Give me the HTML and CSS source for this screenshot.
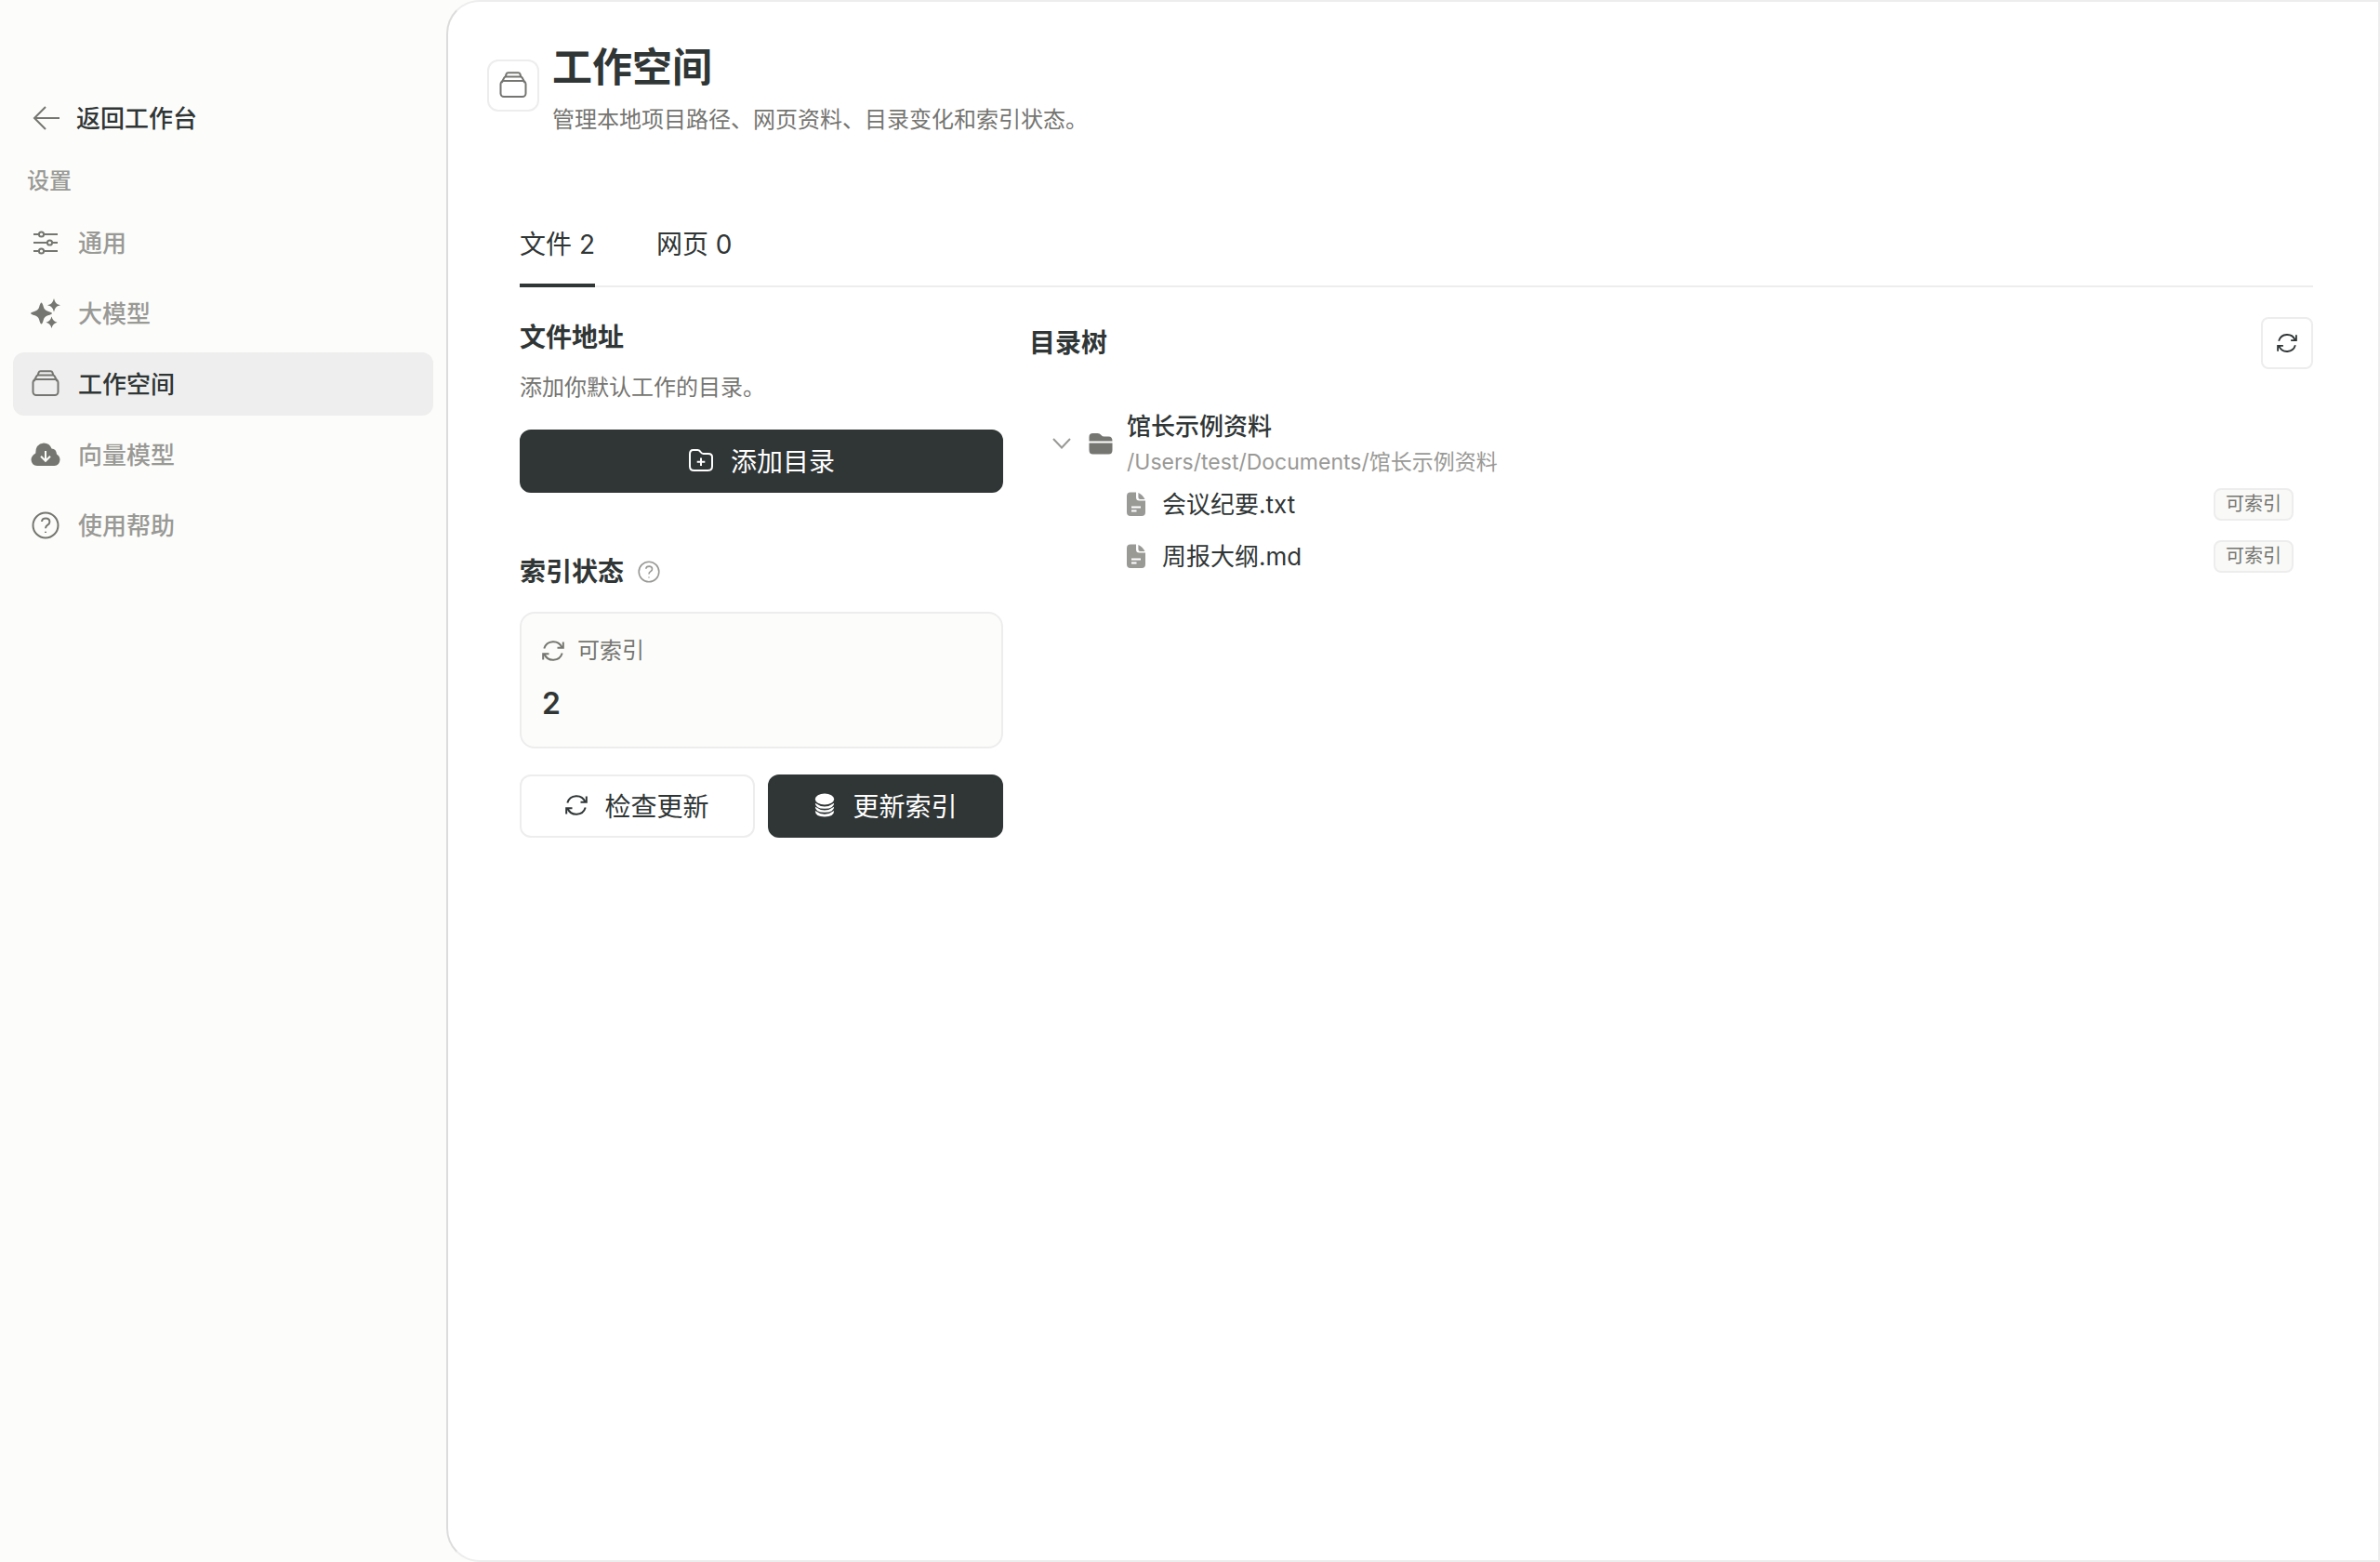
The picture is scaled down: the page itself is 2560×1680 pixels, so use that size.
FILE: index.html
```html
<!DOCTYPE html>
<html lang="zh-CN">
<head>
<meta charset="utf-8">
<meta name="viewport" content="width=device-width, initial-scale=1">
<title>工作空间</title>
<link rel="stylesheet" href="styles.css">
</head>
<body>
<svg class="sprite" aria-hidden="true">
  <symbol id="stack" viewBox="0 0 30 30">
    <path d="M2.500 12 L5.200 6.800 a2.200 2.200 0 0 1 1.900-1.200 h15.800 a2.200 2.200 0 0 1 1.900 1.200 L27.500 12 M6.500 5.800 L7.600 2.600 a2 2 0 0 1 1.900-1.300 h11 a2 2 0 0 1 1.900 1.300 L23.500 5.800"/>
    <rect x="1.500" y="10" width="27" height="17" rx="3.500"/>
  </symbol>
  <symbol id="refresh" viewBox="0 0 24 24">
    <path d="M2.300 9.500 A10.200 10.200 0 0 1 21.500 8.500 M22.800 2.500 V8.800 H16.500 M21.700 14.500 A10.200 10.200 0 0 1 2.500 15.500 M1.200 21.500 V15.200 H7.500"/>
  </symbol>
  <symbol id="help" viewBox="0 0 30 30">
    <circle cx="15" cy="15" r="13.500"/>
    <path d="M11 11 Q11.300 7.600 15.200 7.600 Q19.400 7.600 19.400 11.200 Q19.400 13.300 17.200 14.600 Q15 15.900 15 18.200 M15 21.800 V23"/>
  </symbol>
  <symbol id="file" viewBox="0 0 20 26">
    <path class="solid" d="M4 0.500 H10 V6 Q10 9.500 13.500 9.500 H20 V22 Q20 26 16 26 H4 Q0 26 0 22 V4.500 Q0 0.500 4 0.500 Z M12.400 1 Q17 3 19.500 8 H14.500 Q12.400 8 12.400 6 Z"/>
    <path class="cut" d="M5 16.500 H15 M5 20.500 H10.500"/>
  </symbol>
</svg>
<div class="app">
  <aside class="sidebar">
    <a class="back" href="#">
      <svg class="icon" viewBox="0 0 30 30"><path d="M14 3 L2 15 L14 27 M2 15 H29"/></svg>
      <span>返回工作台</span>
    </a>
    <h2 class="group">设置</h2>
    <nav class="nav">
      <a class="item" href="#"><svg class="icon" viewBox="0 0 30 30"><path d="M2 6 H7.800 M13.200 6 H28 M2 15 H16.800 M22.200 15 H28 M2 24 H7.800 M13.200 24 H28"/><circle cx="10.500" cy="6" r="2.600"/><circle cx="19.500" cy="15" r="2.600"/><circle cx="10.500" cy="24" r="2.600"/></svg><span>通用</span></a>
      <a class="item" href="#"><svg class="icon" viewBox="0 0 30 30"><path class="solid" d="M10.500 3.500 Q11.600 3.500 12.800 8 Q13.800 11.700 17.500 12.700 Q22 14 22 15 Q22 16 17.500 17.300 Q13.800 18.300 12.800 22 Q11.600 26.500 10.500 26.500 Q9.400 26.500 8.200 22 Q7.200 18.300 3.500 17.300 Q-1 16 -1 15 Q-1 14 3.500 12.700 Q7.200 11.700 8.200 8 Q9.400 3.500 10.500 3.500 Z M24 -1 Q25 3 26.300 4 Q27 5.200 31 6.200 Q27 7.200 26.300 8.400 Q25 9.200 24 13.400 Q22.900 9.200 21.600 8.400 Q20.800 7.200 17 6.200 Q20.800 5.200 21.600 4 Q22.900 3 24 -1 Z M21.500 18.500 Q22.500 22 23.800 22.800 Q24.500 24 27.500 24.800 Q24.500 25.600 23.800 26.800 Q22.500 27.600 21.500 31 Q20.500 27.600 19.200 26.800 Q18.500 25.600 15.500 24.800 Q18.500 24 19.200 22.800 Q20.500 22 21.500 18.500 Z"/></svg><span>大模型</span></a>
      <a class="item active" href="#" aria-current="page"><svg class="icon"><use href="#stack"/></svg><span>工作空间</span></a>
      <a class="item" href="#"><svg class="icon" viewBox="0 0 30 30"><path class="solid" d="M13 2.500 Q19.500 2.500 21.500 8.500 Q26.500 8.500 27 14.500 Q30.500 16.500 30.500 20.500 Q30 26.800 24.500 27 H6 Q0 26.500 -0.500 20.500 Q-0.500 16.500 4.300 13.500 Q4 3.500 13 2.500 Z"/><path class="cloud-arrow" d="M15 11 V21.500 M10 16.800 L15 21.800 L20 16.800"/></svg><span>向量模型</span></a>
      <a class="item" href="#"><svg class="icon"><use href="#help"/></svg><span>使用帮助</span></a>
    </nav>
  </aside>

  <main class="panel">
    <header class="header">
      <span class="header-icon"><svg class="icon"><use href="#stack"/></svg></span>
      <div>
        <h1 class="title">工作空间</h1>
        <p class="desc">管理本地项目路径、网页资料、目录变化和索引状态。</p>
      </div>
    </header>

    <div class="body">
      <div class="tabs" role="tablist">
        <button class="tab selected" role="tab" aria-selected="true">文件 2</button>
        <button class="tab" role="tab" aria-selected="false">网页 0</button>
      </div>

      <div class="columns">
        <section class="settings">
          <h2 class="heading">文件地址</h2>
          <p class="hint">添加你默认工作的目录。</p>
          <button class="button primary add"><svg class="icon medium" viewBox="0 0 28 28"><path d="M2 7.500 V20.500 Q2 25 6.500 25 H21.500 Q26 25 26 20.500 V10.500 Q26 7 22 7 H16.500 Q14.800 7 13.700 5.300 Q12.500 3 10.500 3 H5.500 Q2 3 2 7.500 Z M14 11.500 V20 M9.700 15.700 H18.300"/></svg>添加目录</button>

          <h2 class="heading status-heading">索引状态 <svg class="icon small"><use href="#help"/></svg></h2>
          <div class="card">
            <div class="card-label"><svg class="icon small"><use href="#refresh"/></svg>可索引</div>
            <div class="card-value">2</div>
          </div>
          <div class="actions">
            <button class="button"><svg class="icon small"><use href="#refresh"/></svg>检查更新</button>
            <button class="button primary"><svg class="icon small" viewBox="0 0 24 26"><g class="solid"><ellipse cx="12" cy="6" rx="11" ry="6.500"/><path d="M1 10.500 Q12 18.500 23 10.500 Q23 17 12 17 Q1 17 1 10.500 Z M1 15 Q12 23 23 15 Q23 21.500 12 21.500 Q1 21.500 1 15 Z M1 19.500 Q12 27.500 23 19.500 Q23 26.500 12 26.500 Q1 26.500 1 19.500 Z"/></g></svg>更新索引</button>
          </div>
        </section>

        <section class="directory">
          <div class="toolbar">
            <h2 class="heading">目录树</h2>
            <button class="refresh" aria-label="刷新"><svg class="icon"><use href="#refresh"/></svg></button>
          </div>
          <div class="folder">
            <svg class="icon chevron" viewBox="0 0 20 20"><path d="M1 5 L10 14.500 L19 5"/></svg>
            <svg class="icon medium" viewBox="0 0 28 28"><path class="solid" d="M1.500 11.500 V7 Q1.500 3 5.500 3 H10.500 Q13 3 14.500 5 Q15.500 6.500 18 6.500 H22.500 Q26.500 6.500 26.500 11.500 Z M1.500 13.500 H26.500 V21 Q26.500 25.500 22.500 25.500 H5.500 Q1.500 25.500 1.500 21 Z"/></svg>
            <div>
              <div class="folder-name">馆长示例资料</div>
              <div class="folder-path">/Users/test/Documents/馆长示例资料</div>
            </div>
          </div>
          <ul class="files">
            <li class="file"><svg class="file-icon"><use href="#file"/></svg><span class="file-name">会议纪要.txt</span><span class="badge">可索引</span></li>
            <li class="file"><svg class="file-icon"><use href="#file"/></svg><span class="file-name">周报大纲.md</span><span class="badge">可索引</span></li>
          </ul>
        </section>
      </div>
    </div>
  </main>
</div>
</body>
</html>
```
FILE: styles.css
```css
:root {
  --ink: #303636;
  --muted: #757571;
  --faint: #999996;
  --line: #ededed;
  --canvas: #fcfcfa;
}

* {
  box-sizing: border-box;
}

body {
  margin: 0;
  background: var(--canvas);
  color: var(--ink);
  font-family: Inter, "Noto Sans CJK SC", sans-serif;
  font-size: 26px;
}

h1, h2, p, ul {
  margin: 0;
  padding: 0;
}

button {
  font: inherit;
  color: inherit;
  cursor: pointer;
}

a {
  color: inherit;
  text-decoration: none;
}

.sprite {
  position: absolute;
  width: 0;
  height: 0;
}

.icon {
  flex: none;
  width: 30px;
  height: 30px;
  overflow: visible;
  fill: none;
  stroke: currentColor;
  stroke-width: 2;
}

.icon.medium {
  width: 28px;
  height: 28px;
}

.icon.small {
  width: 24px;
  height: 24px;
}

.solid {
  fill: currentColor;
  stroke: none;
}

.app {
  display: grid;
  grid-template-columns: 480px 1fr;
  min-height: 100vh;
}

/* Sidebar */
.sidebar {
  padding: 108px 14px 0;
}

.back {
  display: flex;
  align-items: center;
  gap: 17px;
  height: 38px;
  padding-left: 21px;
  font-weight: 500;
}

.back .icon,
.item .icon {
  color: var(--muted);
}

.back span,
.item span,
.file-name {
  padding-bottom: 3px;
}

.group {
  margin-top: 30px;
  padding-left: 15px;
  color: var(--faint);
  font-size: 24px;
  font-weight: 500;
  line-height: 38px;
}

.nav {
  display: flex;
  flex-direction: column;
  gap: 8px;
  margin-top: 13px;
}

.item {
  display: flex;
  align-items: center;
  gap: 20px;
  height: 68px;
  padding-left: 20px;
  border-radius: 12px;
  color: var(--faint);
  font-weight: 500;
}

.item.active {
  background: #eee;
  color: var(--ink);
}

.cloud-arrow {
  stroke: var(--canvas);
}

/* Panel */
.panel {
  border: 2px solid var(--line);
  border-left-color: #dcdcdc;
  border-radius: 36px 0 0 36px;
  background: #fff;
}

.header {
  display: flex;
  align-items: flex-start;
  gap: 14px;
  padding: 42px 42px 98px;
}

.header-icon {
  display: grid;
  place-items: center;
  width: 56px;
  height: 56px;
  margin-top: 20px;
  border: 2px solid var(--line);
  border-radius: 12px;
  color: var(--muted);
}

.title {
  font-size: 43px;
  font-weight: 600;
  line-height: 56px;
}

.desc {
  margin-top: 13px;
  color: var(--muted);
  font-size: 24px;
  line-height: 32px;
}

.body {
  padding: 0 70px 0 77px;
}

.tabs {
  display: flex;
  gap: 66px;
  border-bottom: 2px solid var(--line);
}

.tab {
  margin-bottom: -2px;
  padding: 0 0 22px;
  border: 0;
  border-bottom: 4px solid transparent;
  background: none;
  font-size: 28px;
  line-height: 40px;
}

.tab.selected {
  border-color: var(--ink);
}

.columns {
  display: grid;
  grid-template-columns: 520px 1fr;
  gap: 28px;
}

.settings {
  padding-top: 34px;
}

.heading {
  font-size: 28px;
  font-weight: 600;
  line-height: 40px;
}

.hint {
  margin-top: 16px;
  color: var(--muted);
  font-size: 24px;
  line-height: 36px;
}

.button {
  display: flex;
  align-items: center;
  justify-content: center;
  gap: 18px;
  width: 100%;
  height: 68px;
  padding: 0 0 2px;
  border: 2px solid var(--line);
  border-radius: 12px;
  background: #fff;
  font-size: 28px;
}

.button.primary {
  border-color: var(--ink);
  background: var(--ink);
  color: #fff;
}

.add {
  margin-top: 27px;
}

.status-heading {
  display: flex;
  align-items: center;
  gap: 15px;
  margin-top: 65px;
}

.status-heading .icon {
  color: var(--faint);
}

.card {
  margin-top: 23px;
  padding: 22px 22px 24px;
  border: 2px solid var(--line);
  border-radius: 16px;
  background: var(--canvas);
}

.card-label {
  display: flex;
  align-items: center;
  gap: 14px;
  color: var(--muted);
  font-size: 24px;
  line-height: 36px;
}

.card-value {
  margin-top: 17px;
  font-size: 32px;
  font-weight: 600;
  line-height: 44px;
}

.actions {
  display: grid;
  grid-template-columns: 1fr 1fr;
  gap: 14px;
  margin-top: 28px;
}

/* Directory tree */
.directory {
  padding-top: 32px;
}

.toolbar {
  display: flex;
  align-items: center;
  justify-content: space-between;
}

.refresh {
  display: grid;
  place-items: center;
  width: 56px;
  height: 56px;
  padding: 0;
  border: 2px solid var(--line);
  border-radius: 8px;
  background: #fff;
}

.refresh .icon {
  width: 22px;
  height: 22px;
}

.folder {
  display: flex;
  align-items: center;
  margin-top: 44px;
  padding-left: 25px;
  color: var(--muted);
}

.folder .chevron {
  width: 20px;
  height: 20px;
  margin-right: 18px;
  color: var(--faint);
}

.folder .medium {
  margin-right: 14px;
}

.folder-name {
  color: var(--ink);
  font-weight: 500;
  line-height: 36px;
}

.folder-path {
  margin-top: 4px;
  color: var(--faint);
  font-size: 23px;
  line-height: 32px;
}

.files {
  padding: 1px 21px 0 105px;
  list-style: none;
}

.file {
  display: flex;
  align-items: center;
  height: 56px;
}

.file-icon {
  width: 20px;
  height: 26px;
  margin-right: 18px;
  color: var(--faint);
}

.cut {
  fill: none;
  stroke: #fff;
  stroke-width: 2;
}

.badge {
  margin-left: auto;
  padding: 0 11px;
  border: 2px solid var(--line);
  border-radius: 8px;
  background: #f9f9f7;
  color: var(--muted);
  font-size: 20px;
  line-height: 31px;
}
```
